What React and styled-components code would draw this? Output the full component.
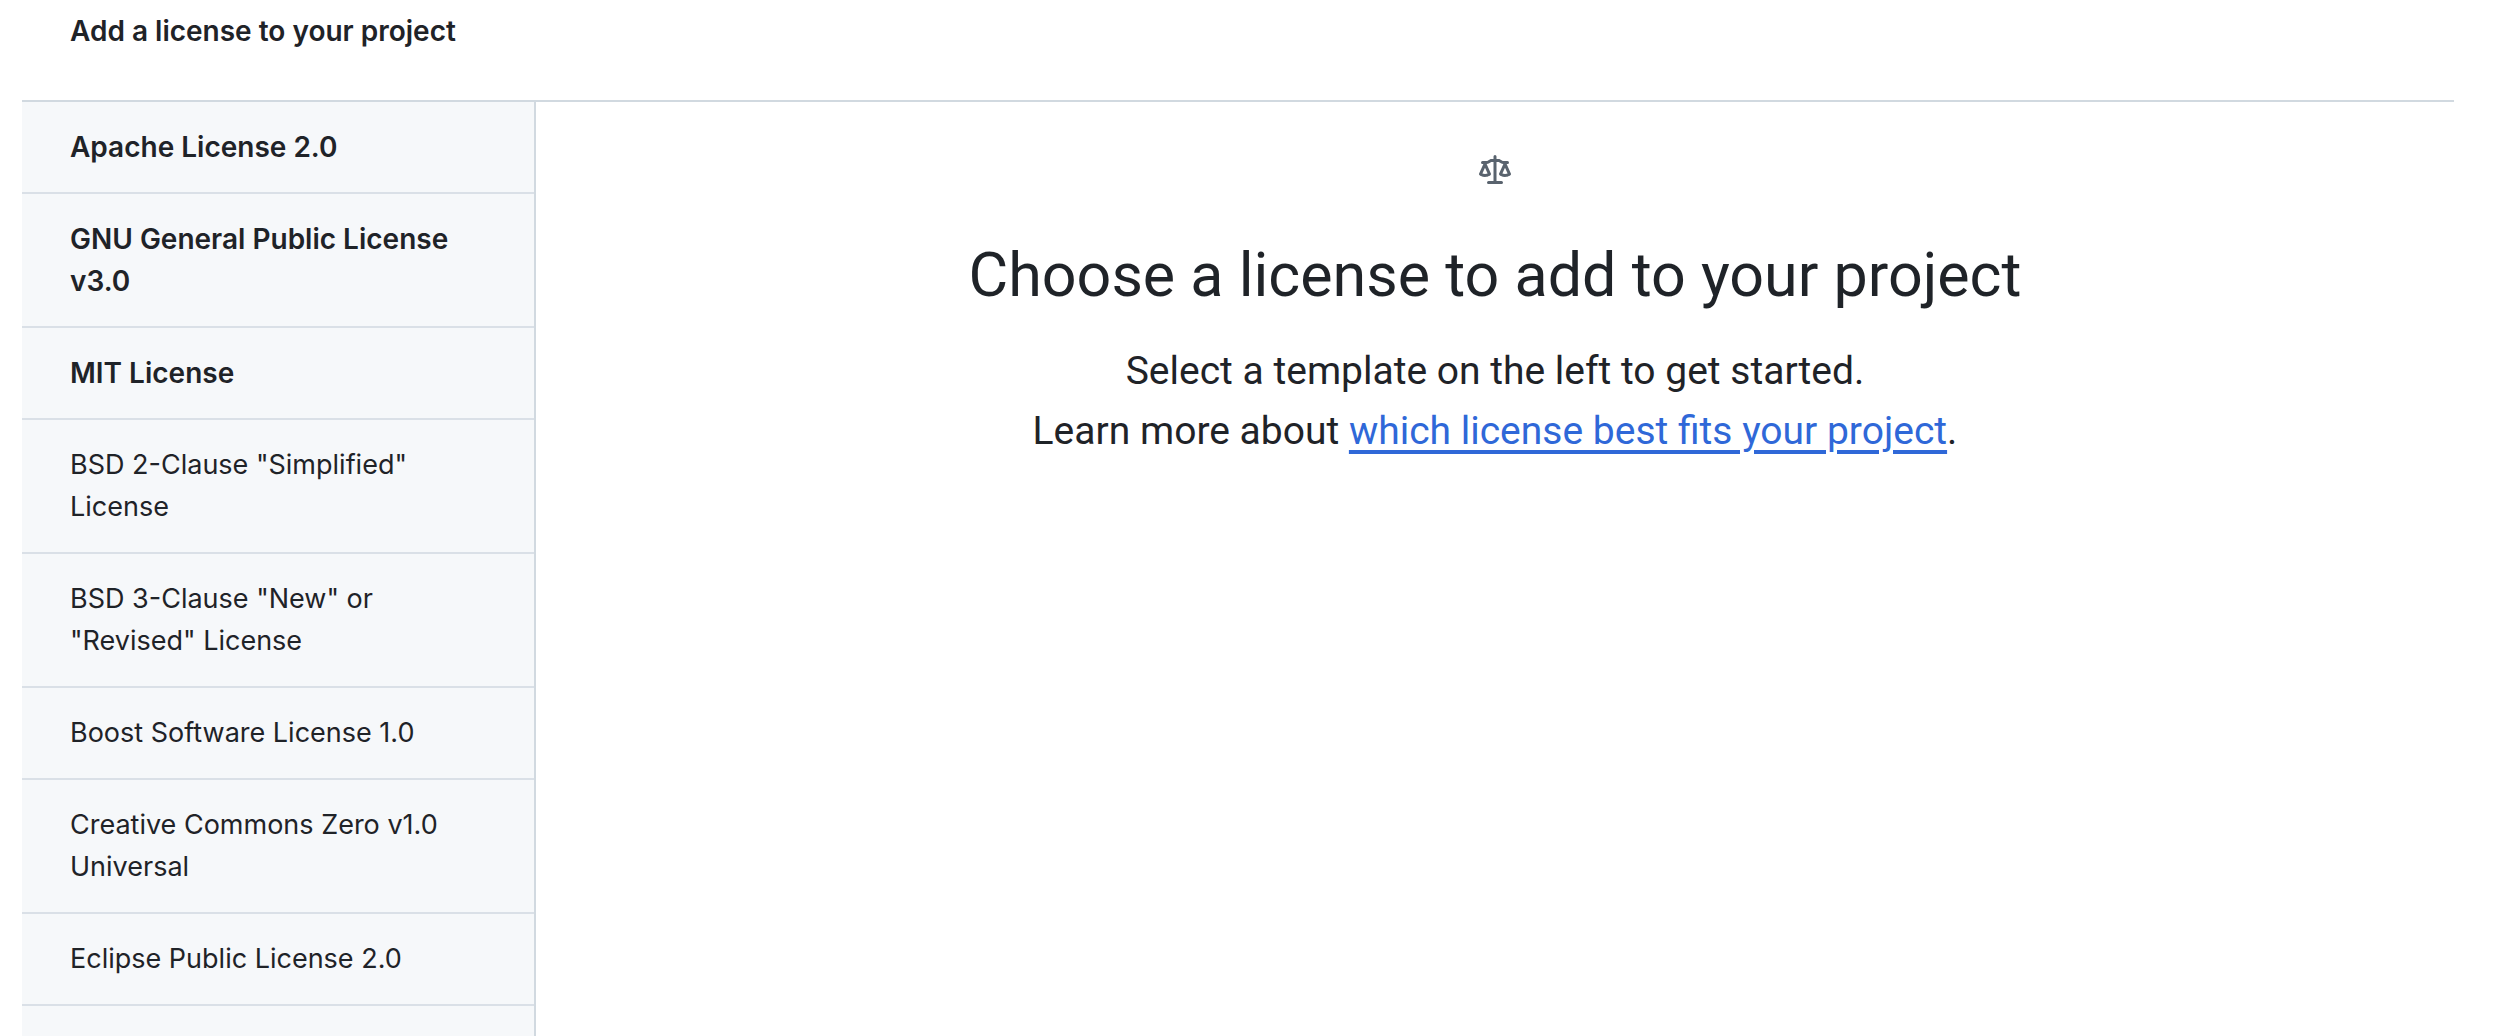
import React from "react";
import styled, { createGlobalStyle } from "styled-components";

const GlobalStyle = createGlobalStyle`
  *, *::before, *::after { box-sizing: border-box; }
  body {
    margin: 0;
    background: #fff;
    color: #1f2328;
    font-family: Inter, "Liberation Sans", sans-serif;
    font-size: 27px;
    line-height: 42px;
  }
`;

const Page = styled.div`
  display: flex;
  flex-direction: column;
  height: 100vh;
  overflow: hidden;
  padding: 0 42px 0 22px;
`;

const Header = styled.header`
  flex: none;
  padding: 10px 48px 48px;
  border-bottom: 2px solid #d1d9e0;
`;

const Title = styled.h1`
  margin: 0;
  font-size: 28px;
  font-weight: 600;
`;

const Body = styled.div`
  display: flex;
  flex: 1;
  min-height: 0;
`;

const Sidebar = styled.nav`
  flex: none;
  width: 514px;
  overflow: hidden;
  background: #f6f8fa;
  border-right: 2px solid #d1d9e0;
`;

const LicenseButton = styled.button`
  display: block;
  width: 100%;
  padding: 24px 48px;
  border: 0;
  border-bottom: 2px solid #dae0e7;
  background: transparent;
  color: inherit;
  font: inherit;
  font-size: ${({ $featured }) => ($featured ? "28px" : "27px")};
  font-weight: ${({ $featured }) => ($featured ? 600 : 400)};
  text-align: left;
  cursor: pointer;
`;

const Blankslate = styled.main`
  flex: 1;
  padding: 53px 48px;
  font-family: Roboto, "Liberation Sans", sans-serif;
  text-align: center;
`;

const LawIcon = styled.svg`
  display: block;
  width: 32px;
  height: 32px;
  margin: 0 auto 40px;
  fill: #59636e;
`;

const Heading = styled.h2`
  margin: 0 0 18px;
  font-size: 61px;
  font-weight: 400;
  line-height: 96px;
`;

const Lead = styled.p`
  margin: 0;
  font-size: 39px;
  line-height: 60px;
`;

const TextLink = styled.a`
  color: #2f68d8;
  text-decoration: underline;
  text-decoration-thickness: 4px;
  text-underline-offset: 6px;
`;

const licenses = [
  { name: "Apache License 2.0", featured: true },
  { name: "GNU General Public License v3.0", featured: true },
  { name: "MIT License", featured: true },
  { name: 'BSD 2-Clause "Simplified" License' },
  { name: 'BSD 3-Clause "New" or "Revised" License' },
  { name: "Boost Software License 1.0" },
  { name: "Creative Commons Zero v1.0 Universal" },
  { name: "Eclipse Public License 2.0" },
];

export default function App() {
  return (
    <Page>
      <GlobalStyle />
      <Header>
        <Title>Add a license to your project</Title>
      </Header>
      <Body>
        <Sidebar aria-label="License templates">
          {licenses.map(({ name, featured }) => (
            <LicenseButton key={name} type="button" $featured={featured}>
              {name}
            </LicenseButton>
          ))}
        </Sidebar>
        <Blankslate>
          <LawIcon viewBox="0 0 16 16" aria-hidden="true">
            <path d="M8.75.75V2h.985c.304 0 .603.08.867.231l1.29.736c.038.022.08.033.124.033h2.234a.75.75 0 0 1 0 1.5h-.427l2.111 4.692a.75.75 0 0 1-.154.838l-.53-.53.529.531-.001.002-.002.002-.006.006-.006.005-.01.01-.045.04c-.21.176-.441.327-.686.45C14.556 10.78 13.88 11 13 11a4.498 4.498 0 0 1-2.023-.454 3.544 3.544 0 0 1-.686-.45l-.045-.04-.016-.015-.006-.006-.004-.004v-.001a.75.75 0 0 1-.154-.838L12.178 4.5h-.162c-.305 0-.604-.079-.868-.231l-1.29-.736a.245.245 0 0 0-.124-.033H8.75V13h2.5a.75.75 0 0 1 0 1.5h-6.5a.75.75 0 0 1 0-1.5h2.5V3.5h-.984a.245.245 0 0 0-.124.033l-1.289.737c-.265.15-.564.23-.869.23h-.162l2.112 4.692a.75.75 0 0 1-.154.838l-.53-.53.529.531-.001.002-.002.002-.006.006-.016.015-.045.04c-.21.176-.441.327-.686.45C4.556 10.78 3.88 11 3 11a4.498 4.498 0 0 1-2.023-.454 3.544 3.544 0 0 1-.686-.45l-.045-.04-.016-.015-.006-.006-.004-.004v-.001a.75.75 0 0 1-.154-.838L2.178 4.5H1.75a.75.75 0 0 1 0-1.5h2.234a.249.249 0 0 0 .125-.033l1.288-.737c.265-.15.564-.23.869-.23h.984V.75a.75.75 0 0 1 1.5 0Zm2.945 8.477c.285.135.718.273 1.305.273s1.02-.138 1.305-.273L13 6.327Zm-10 0c.285.135.718.273 1.305.273s1.02-.138 1.305-.273L3 6.327Z" />
          </LawIcon>
          <Heading>Choose a license to add to your project</Heading>
          <Lead>
            Select a template on the left to get started.
            <br />
            Learn more about{" "}
            <TextLink href="https://docs.github.com/licensing">
              which license best fits your project
            </TextLink>
            .
          </Lead>
        </Blankslate>
      </Body>
    </Page>
  );
}
